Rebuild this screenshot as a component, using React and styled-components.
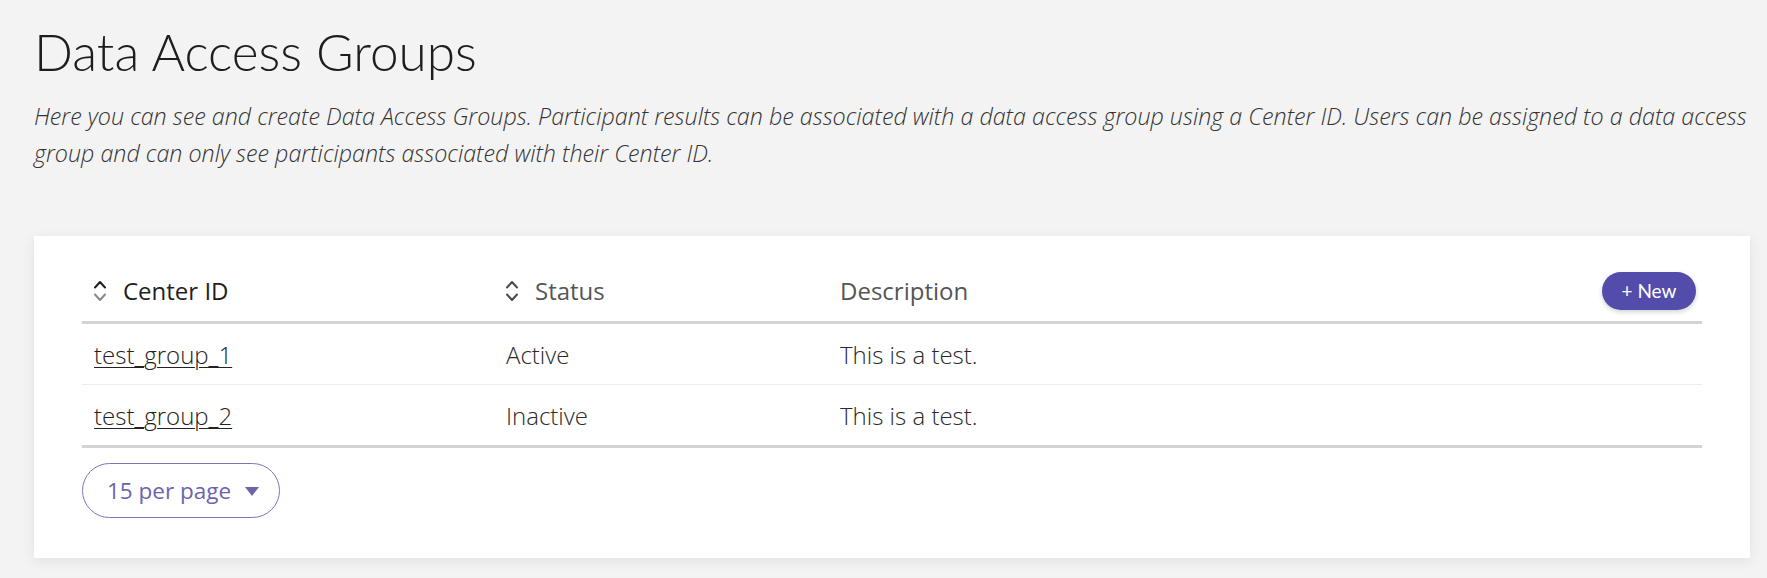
import React from "react";
import styled, { createGlobalStyle } from "styled-components";

const GlobalStyle = createGlobalStyle`
  html, body { margin: 0; padding: 0; background: #f3f3f3; }
  body { font-family: "Open Sans", "Noto Sans", sans-serif; color: #333; }
  * { box-sizing: border-box; }
`;

const Page = styled.main`
  padding: 21px 17px 19px 34px;
`;

const Title = styled.h1`
  margin: 0;
  font-family: Lato, "Open Sans", sans-serif;
  font-weight: 300;
  font-size: 51.3px;
  line-height: 61px;
  color: #1d1d1d;
`;

const Intro = styled.p`
  margin: 16px 0 0;
  font-style: italic;
  font-weight: 300;
  font-size: 23.3px;
  line-height: 37px;
  color: #333;
`;

const Card = styled.section`
  margin-top: 64px;
  background: #fff;
  padding: 24px 48px 40px;
  box-shadow: 0 3px 12px rgba(0, 0, 0, 0.08);
`;

const Row = styled.div`
  display: grid;
  grid-template-columns: 412px 334px 1fr auto;
  align-items: center;
  height: ${(p) => p.$h}px;
  border-bottom: ${(p) => p.$border};
`;

const HeadCell = styled.div`
  display: flex;
  align-items: center;
  gap: 17px;
  padding: 0 12px;
  font-size: 24px;
  font-weight: 400;
  color: ${(p) => (p.$active ? "#1f1f1f" : "#555")};
  white-space: nowrap;
`;

const Cell = styled.div`
  padding: 0 12px;
  font-size: 24px;
  font-weight: 300;
  color: #2a2a2a;
  white-space: nowrap;
`;

const GroupLink = styled.a`
  color: #222;
  text-decoration: underline;
  text-underline-offset: 3px;
  text-decoration-thickness: 1px;
  cursor: pointer;
`;

const NewButton = styled.button`
  justify-self: end;
  margin-right: 6px;
  height: 38px;
  width: 94px;
  border: none;
  border-radius: 19px;
  background: #544cab;
  color: #fff;
  font-family: Lato, "Open Sans", sans-serif;
  font-size: 19px;
  font-weight: 400;
  box-shadow: 0 2px 5px rgba(0, 0, 0, 0.18);
  cursor: pointer;
  padding: 0;
`;

const Footer = styled.div`
  padding-top: 15px;
`;

const PerPage = styled.button`
  display: inline-flex;
  align-items: center;
  gap: 14px;
  height: 55px;
  padding: 0 20px 0 24px;
  border: 1px solid #7c76b9;
  border-radius: 28px;
  background: #fff;
  color: #6a64ae;
  font-family: "Open Sans", sans-serif;
  font-size: 22.5px;
  font-weight: 400;
  cursor: pointer;
`;

const Caret = styled.span`
  width: 0;
  height: 0;
  border-left: 7px solid transparent;
  border-right: 7px solid transparent;
  border-top: 9px solid #6a64ae;
  margin-top: 2px;
`;

function SortIcon({ up = "#555", down = "#555" }) {
  return (
    <svg width="12" height="22" viewBox="0 0 12 22" fill="none" strokeWidth="2" strokeLinecap="round" strokeLinejoin="round">
      <polyline points="1,7.5 6,2 11,7.5" stroke={up} />
      <polyline points="1,14.5 6,20 11,14.5" stroke={down} />
    </svg>
  );
}

const rows = [
  { id: "test_group_1", status: "Active", desc: "This is a test." },
  { id: "test_group_2", status: "Inactive", desc: "This is a test." },
];

export default function App() {
  return (
    <>
      <GlobalStyle />
      <Page>
        <Title>Data Access Groups</Title>
        <Intro>
          Here you can see and create Data Access Groups. Participant results can be associated with a data access group using a Center ID. Users can be assigned to a data access group and can only see participants associated with their Center ID.
        </Intro>
        <Card>
          <Row $h={64} $border="3px solid #d3d3d3">
            <HeadCell $active>
              <SortIcon up="#1f1f1f" down="#8a8a8a" />
              Center ID
            </HeadCell>
            <HeadCell>
              <SortIcon up="#4a4a4a" down="#4a4a4a" />
              Status
            </HeadCell>
            <HeadCell>Description</HeadCell>
            <NewButton>+ New</NewButton>
          </Row>
          {rows.map((r, i) => (
            <Row
              key={r.id}
              $h={i === rows.length - 1 ? 63 : 61}
              $border={i === rows.length - 1 ? "3px solid #d3d3d3" : "1px solid #ececec"}
            >
              <Cell>
                <GroupLink>{r.id}</GroupLink>
              </Cell>
              <Cell>{r.status}</Cell>
              <Cell>{r.desc}</Cell>
              <span />
            </Row>
          ))}
          <Footer>
            <PerPage>
              15 per page
              <Caret />
            </PerPage>
          </Footer>
        </Card>
      </Page>
    </>
  );
}
